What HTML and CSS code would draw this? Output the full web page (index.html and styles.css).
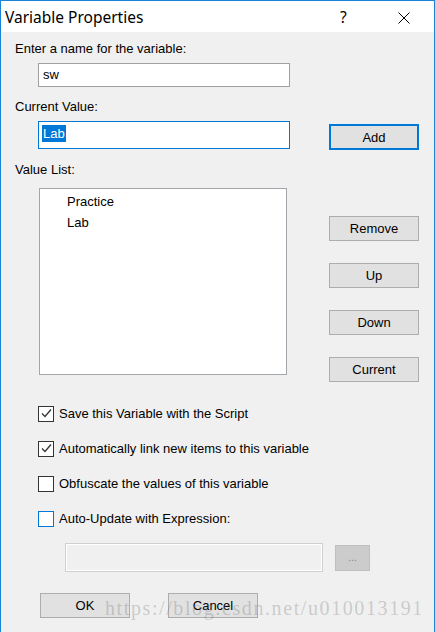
FILE: index.html
```html
<!DOCTYPE html>
<html>
<head>
<meta charset="utf-8">
<link rel="stylesheet" href="styles.css">
</head>
<body>
<div class="window">
  <div class="titlebar">
    <div class="title">Variable Properties</div>
    <div class="help">?</div>
    <div class="close">
      <svg width="12" height="12" viewBox="0 0 12 12"><path d="M0.5 0.5 L11.5 11.5 M11.5 0.5 L0.5 11.5" stroke="#000" stroke-width="1" fill="none"/></svg>
    </div>
  </div>
  <div class="content">
    <div class="label l1">Enter a name for the variable:</div>
    <div class="field name-field">sw</div>
    <div class="label l2">Current Value:</div>
    <div class="row cur-row">
      <div class="field cur-field"><span class="sel">Lab</span></div>
      <div class="btn btn-default add-btn">Add</div>
    </div>
    <div class="label l3">Value List:</div>
    <div class="row list-row">
      <div class="listbox">
        <div class="item">Practice</div>
        <div class="item">Lab</div>
      </div>
      <div class="btn-col">
        <div class="btn">Remove</div>
        <div class="btn">Up</div>
        <div class="btn">Down</div>
        <div class="btn">Current</div>
      </div>
    </div>
    <div class="checks">
      <div class="check"><span class="box checked"><svg width="13" height="13" viewBox="0 0 13 13"><path d="M2 6.5 L5 9.5 L11 2.5" stroke="#333" stroke-width="1.3" fill="none"/></svg></span><span>Save this Variable with the Script</span></div>
      <div class="check"><span class="box checked"><svg width="13" height="13" viewBox="0 0 13 13"><path d="M2 6.5 L5 9.5 L11 2.5" stroke="#333" stroke-width="1.3" fill="none"/></svg></span><span>Automatically link new items to this variable</span></div>
      <div class="check"><span class="box"></span><span>Obfuscate the values of this variable</span></div>
      <div class="check"><span class="box focus"></span><span>Auto-Update with Expression:</span></div>
    </div>
    <div class="row expr-row">
      <div class="expr-field"></div>
      <div class="dots-btn">...</div>
    </div>
    <div class="row ok-row">
      <div class="btn">OK</div>
      <div class="btn">Cancel</div>
    </div>
    <div class="watermark">https://blog.csdn.net/u010013191</div>
  </div>
</div>
</body>
</html>
```

FILE: styles.css
```css
* { box-sizing: border-box; }
html, body { margin: 0; padding: 0; }
body {
  width: 435px;
  height: 632px;
  overflow: hidden;
  font-family: "Liberation Sans", Arial, sans-serif;
  font-size: 13px;
  color: #000;
  background: #f0f0f0;
}
.window {
  width: 435px;
  height: 632px;
  border: 1px solid #1883d7;
  border-bottom: none;
  display: flex;
  flex-direction: column;
}
.titlebar {
  height: 31px;
  background: #fff;
  display: flex;
  align-items: center;
  flex-shrink: 0;
}
.title {
  font-family: "Noto Sans", "Open Sans", sans-serif;
  font-size: 15.5px;
  padding-left: 4px;
  flex: 1;
  line-height: 20px;
  margin-top: 1px;
}
.help {
  font-family: "Noto Sans", sans-serif;
  font-size: 15.5px;
  width: 20px;
  margin-right: 38px;
  line-height: 20px;
  margin-top: 1px;
}
.close {
  width: 12px;
  height: 12px;
  margin-right: 24px;
  display: flex;
  margin-top: 2px;
}
.content {
  flex: 1;
  background: #f0f0f0;
  position: relative;
  padding: 9px 0 0 14px;
  display: flex;
  flex-direction: column;
  align-items: flex-start;
}
.label {
  line-height: 16px;
  white-space: nowrap;
}
.l2 { margin-top: 12px; }
.l3 { margin-top: 12px; }
.field {
  background: #fff;
  border: 1px solid #a0a0a0;
  width: 252px;
  margin-left: 23px;
  line-height: 16px;
  padding-left: 4px;
}
.name-field {
  height: 24px;
  margin-top: 6px;
  padding-top: 3px;
}
.row { display: flex; }
.cur-row { margin-top: 6px; align-items: flex-start; }
.cur-field {
  height: 28px;
  border-color: #0078d7;
  padding-top: 2px;
  padding-left: 3px;
}
.sel {
  display: inline-block;
  background: #0078d7;
  color: #fff;
  padding: 0 1px;
  line-height: 17px;
  height: 17px;
  margin-top: 1px;
}
.btn {
  width: 90px;
  height: 25px;
  background: #e1e1e1;
  border: 1px solid #adadad;
  display: flex;
  align-items: center;
  justify-content: center;
  white-space: nowrap;
  flex-shrink: 0;
}
.btn-default {
  border: 2px solid #0078d7;
  height: 26px;
}
.add-btn { margin-left: 39px; margin-top: 3px; }
.list-row { margin-top: 10px; height: 187px; align-items: flex-start; }
.listbox {
  width: 248px;
  height: 187px;
  margin-left: 24px;
  background: #fff;
  border: 1px solid #a2a5aa;
  padding: 2px 0 0 27px;
  flex-shrink: 0;
}
.item { line-height: 21px; white-space: nowrap; }
.btn-col {
  margin-left: 42px;
  margin-top: 28px;
  display: flex;
  flex-direction: column;
  gap: 22px;
}
.checks {
  margin-top: 21px;
  margin-left: 23px;
  display: flex;
  flex-direction: column;
}
.check {
  height: 35px;
  display: flex;
  align-items: center;
  white-space: nowrap;
}
.box {
  width: 16px;
  height: 16px;
  border: 1px solid #333;
  background: #fff;
  margin-right: 5px;
  display: flex;
  align-items: center;
  justify-content: center;
}
.box.focus { border-color: #0078d7; }
.expr-row { margin-top: 7px; margin-left: 50px; align-items: center; }
.expr-field {
  width: 258px;
  height: 29px;
  background: #f0f0f0;
  border: 1px solid #d0d0d0;
  box-shadow: inset 0 0 0 1px #fff;
}
.dots-btn {
  width: 35px;
  height: 26px;
  margin-left: 12px;
  background: #cccccc;
  border: 1px solid #bfbfbf;
  color: #8a8a8a;
  font-size: 11px;
  display: flex;
  align-items: center;
  justify-content: center;
  padding-bottom: 2px;
}
.ok-row { margin-top: 21px; margin-left: 25px; gap: 38px; }
.watermark {
  position: absolute;
  left: 104px;
  top: 564px;
  font-family: "Liberation Serif", "DejaVu Serif", serif;
  font-size: 20px;
  line-height: 24px;
  letter-spacing: 1.6px;
  color: rgba(110, 110, 110, 0.3);
  white-space: nowrap;
  pointer-events: none;
}
```
